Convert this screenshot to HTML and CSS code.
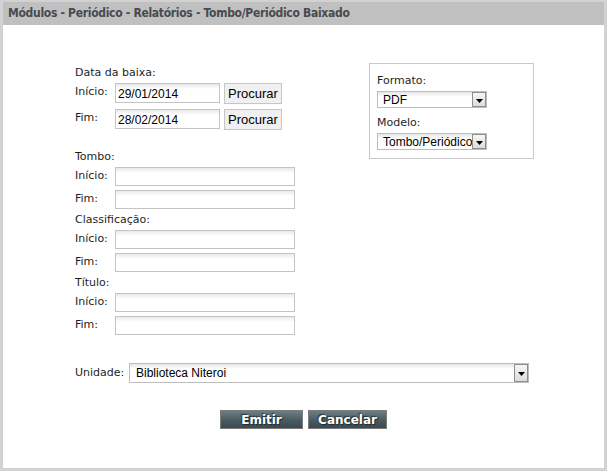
FILE: index.html
```html
<!DOCTYPE html>
<html lang="pt">
<head>
<meta charset="utf-8">
<title>Tombo/Periódico Baixado</title>
<link rel="stylesheet" href="styles.css">
</head>
<body>
<div class="frame">
  <div class="header">Módulos - Periódico - Relatórios - Tombo/Periódico Baixado</div>
  <div class="content">
    <div class="top">
      <div class="left">
        <div class="group">
          <div class="glabel">Data da baixa:</div>
          <div class="row">
            <span class="lbl">Início:</span>
            <input class="date" type="text" value="29/01/2014">
            <button class="proc" type="button">Procurar</button>
          </div>
          <div class="row row-fim">
            <span class="lbl">Fim:</span>
            <input class="date" type="text" value="28/02/2014">
            <button class="proc" type="button">Procurar</button>
          </div>
        </div>
        <div class="group group-first">
          <div class="glabel">Tombo:</div>
          <div class="row"><span class="lbl">Início:</span><input class="txt" type="text"></div>
          <div class="row"><span class="lbl">Fim:</span><input class="txt" type="text"></div>
        </div>
        <div class="group">
          <div class="glabel">Classificação:</div>
          <div class="row"><span class="lbl">Início:</span><input class="txt" type="text"></div>
          <div class="row"><span class="lbl">Fim:</span><input class="txt" type="text"></div>
        </div>
        <div class="group">
          <div class="glabel">Título:</div>
          <div class="row"><span class="lbl">Início:</span><input class="txt" type="text"></div>
          <div class="row"><span class="lbl">Fim:</span><input class="txt" type="text"></div>
        </div>
      </div>
      <div class="box">
        <div class="blabel">Formato:</div>
        <div class="sel sel-small">
          <select><option>PDF</option></select>
          <span class="arrow"><svg width="7" height="4" viewBox="0 0 7 4"><path d="M0 0H7L3.5 4Z" fill="#000"/></svg></span>
        </div>
        <div class="blabel">Modelo:</div>
        <div class="sel sel-small sel-clip">
          <select><option>Tombo/Periódico Baixado</option></select>
          <span class="arrow"><svg width="7" height="4" viewBox="0 0 7 4"><path d="M0 0H7L3.5 4Z" fill="#000"/></svg></span>
        </div>
      </div>
    </div>
    <div class="unidade">
      <span class="ulabel">Unidade:</span>
      <div class="sel sel-wide">
        <select><option>Biblioteca Niteroi</option></select>
        <span class="arrow"><svg width="7" height="4" viewBox="0 0 7 4"><path d="M0 0H7L3.5 4Z" fill="#000"/></svg></span>
      </div>
    </div>
    <div class="actions">
      <button class="act act-emitir" type="button">Emitir</button>
      <button class="act act-cancelar" type="button">Cancelar</button>
    </div>
  </div>
</div>
</body>
</html>
```

FILE: styles.css
```css
* { box-sizing: border-box; }
html, body { margin: 0; padding: 0; background: #fff; }
body { font-family: "DejaVu Sans", Verdana, sans-serif; font-size: 11px; color: #1e1e1e; }

.frame {
  width: 607px;
  height: 471px;
  border: 3px solid #d2d2d2;
  border-top-width: 2px;
  background: #fff;
}
.header {
  height: 23px;
  background: #c0c0c0;
  color: #464b52;
  font-family: "DejaVu Sans Condensed", "DejaVu Sans", sans-serif;
  font-weight: bold;
  font-size: 12px;
  letter-spacing: -0.3px;
  line-height: 23px;
  padding-left: 5px;
}
.content { padding: 37px 0 0 72px; }

.top { display: flex; align-items: flex-start; }
.left { width: 220px; display: flex; flex-direction: column; }
.group { display: flex; flex-direction: column; gap: 4px; }
.group-first { margin-top: 16px; }
.glabel { height: 17px; line-height: 13px; padding-top: 4px; }
.row { display: flex; align-items: flex-start; }
.row-fim { margin-top: 1px; }
.lbl { width: 40px; flex: none; line-height: 13px; padding-top: 2px; }

input {
  border: 1px solid #c4c4c4;
  background: linear-gradient(#e9e9e9, #ffffff 5px);
  font-family: "Liberation Sans", Arial, sans-serif;
  font-size: 12px;
  color: #000;
  padding: 1px 2px 0;
  margin: 0;
  outline: none;
}
.date { width: 105px; height: 20px; }
.txt { width: 180px; height: 19px; }

.proc {
  margin-left: 4px;
  width: 58px;
  height: 21px;
  padding: 0;
  border: 1px solid #c6c6c6;
  background: #f0f0f0;
  font-family: "Liberation Sans", Arial, sans-serif;
  font-size: 13px;
  color: #000;
}

.box {
  margin-left: 74px;
  margin-top: 1px;
  width: 165px;
  height: 96px;
  border: 1px solid #c8c8c8;
  padding: 6px 0 0 7px;
  display: flex;
  flex-direction: column;
  gap: 4px;
}
.blabel { height: 17px; line-height: 13px; padding-top: 4px; }

.sel { position: relative; }
.sel select {
  -webkit-appearance: none;
  appearance: none;
  width: 100%;
  height: 100%;
  margin: 0;
  border: 1px solid #bdbdbd;
  border-radius: 0;
  background: linear-gradient(#e6e6e6, #ffffff 5px);
  font-family: "Liberation Sans", Arial, sans-serif;
  font-size: 12px;
  color: #000;
  padding: 0 16px 0 5px;
  outline: none;
}
.sel-small { width: 110px; height: 17px; }
.sel-clip select { padding-right: 0; }
.sel-wide { width: 400px; height: 20px; }
.sel-wide select { padding-left: 6px; }
.sel .arrow {
  position: absolute;
  top: 1px;
  bottom: 1px;
  right: 1px;
  width: 14px;
  border: 1px solid #8e8e8e;
  background: linear-gradient(#f6f6f6, #dcdcdc);
  display: flex;
  align-items: center;
  justify-content: center;
  padding-top: 2px;
}
.sel .arrow svg { display: block; }

.unidade { display: flex; align-items: center; gap: 5px; margin-top: 28px; }
.ulabel { width: 49px; line-height: 13px; padding-bottom: 2px; }

.actions {
  display: flex;
  justify-content: center;
  gap: 5px;
  margin: 27px 0 0 -72px;
}
.act {
  height: 19px;
  padding: 0;
  border: 1px solid #7c7c7c;
  background: linear-gradient(#6d7e85, #4a5a60 55%, #3b4a50);
  color: #fff;
  font-family: "DejaVu Sans", Verdana, sans-serif;
  font-weight: bold;
  font-size: 12px;
  line-height: 16px;
  text-shadow: 1px 1px 1px #1c2a30, -1px -1px 1px #2a383e;
}
.act-emitir { width: 83px; }
.act-cancelar { width: 79px; }
```
